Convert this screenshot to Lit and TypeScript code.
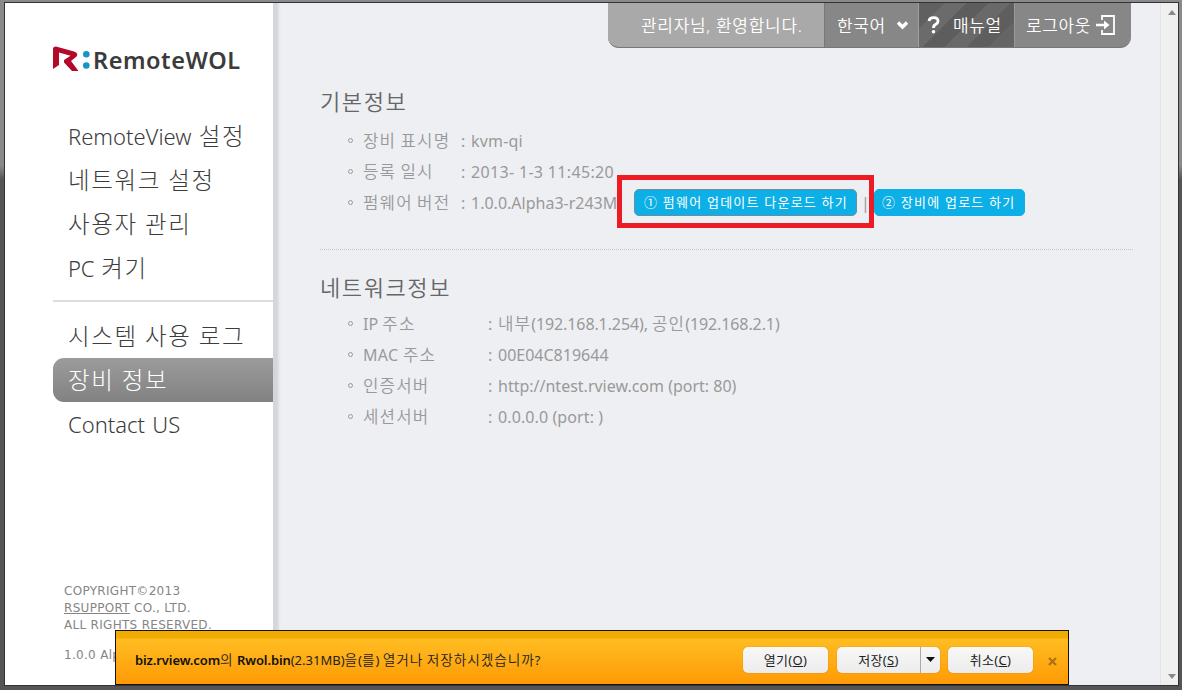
import { LitElement, html, css, nothing } from "lit";
import { customElement } from "lit/decorators.js";
import { styleMap } from "lit/directives/style-map.js";

interface Entry { label: string; ls?: number; active?: boolean; }
interface Row { label: string; value: string; ls?: number; vs?: number; }

const MENU_MAIN: Entry[] = [
  { label: "RemoteView 설정" },
  { label: "네트워크 설정" },
  { label: "사용자 관리" },
  { label: "PC 켜기", ls: -0.2 },
];
const MENU_SUB: Entry[] = [
  { label: "시스템 사용 로그" },
  { label: "장비 정보", active: true },
  { label: "Contact US" },
];
const BASIC: Row[] = [
  { label: "장비 표시명", value: "kvm-qi", vs: 0.2 },
  { label: "등록 일시", value: "2013- 1-3 11:45:20", vs: 0.33 },
  { label: "펌웨어 버전", value: "1.0.0.Alpha3-r243M" },
];
const NETWORK: Row[] = [
  { label: "IP 주소", value: "내부(192.168.1.254), 공인(192.168.2.1)", vs: -0.1 },
  { label: "MAC 주소", value: "00E04C819644", ls: 0.3 },
  { label: "인증서버", value: "http://ntest.rview.com (port: 80)" },
  { label: "세션서버", value: "0.0.0.0 (port: )", vs: 0.1 },
];

const spacing = (v?: number) => styleMap({ letterSpacing: `${v ?? 0}px` });

/** Wraps each Hangul run so that it can be set wider than the Latin text round it. */
const mixed = (text: string) =>
  text.split(/([가-힣]+)/).map((part) => (/[가-힣]/.test(part) ? html`<span class="ko">${part}</span>` : part));

@customElement("app-root")
export class AppRoot extends LitElement {
  static styles = css`
    :host { display: block; width: 1182px; height: 690px; font-family: "Noto Sans", "Noto Sans CJK KR", sans-serif; }
    * { box-sizing: border-box; }
    .ko { font-size: 1.05em; letter-spacing: 0.07em; font-weight: 350; font-family: "Noto Sans CJK KR", sans-serif; line-height: 1; }
    .frame { position: relative; height: 690px; padding: 2px 3px 4px 4px; overflow: hidden;
      background: linear-gradient(#8a8a8a, #8a8a8a 24%, #555 26%, #555); }
    .window { height: 684px; display: flex; border: 1px solid #333; background: #eeeff3; }
    .side { width: 268px; background: #fff; display: flex; flex-direction: column; flex: none; }
    .logo { display: block; margin: 42px 0 0 47px; }
    .menu { display: flex; flex-direction: column; margin-left: 48px; }
    .menu.main { margin-top: 37px; height: 188px; border-bottom: 2px solid #ddd; }
    .menu.sub { margin-top: 12px; }
    .item { height: 44px; line-height: 44px; padding-left: 15px; font-size: 22px; font-weight: 350; word-spacing: 1.5px; color: #3c3c3c; white-space: nowrap; }
    .item .ko { font-weight: 300; font-size: 23.5px; }
    .item.active { color: #fff; background: linear-gradient(#9b9b9b, #828282); border-radius: 11px 0 0 11px; }
    .copy { margin: 137px 0 0 59px; font: 12px/17px "DejaVu Sans", sans-serif; letter-spacing: 0.3px; color: #858585; white-space: nowrap; }
    .copy div { height: 17px; }
    .copy .ver { margin-top: 13px; }
    .shade { width: 8px; flex: none; background: linear-gradient(90deg, #d6d6da 0 4px, #e6e7eb 6px, #eeeff3); }
    .main-area { flex: 1; display: flex; flex-direction: column; padding-left: 39px; min-width: 0; }
    .top { display: flex; width: 523px; height: 45px; margin-left: 288px; border-radius: 0 0 11px 11px; overflow: hidden;
      background: #878787; color: #fff; font-size: 17px; font-weight: 350; letter-spacing: 0.6px; line-height: 43px; border-bottom: 1px solid #777; white-space: nowrap; }
    .top > div { display: flex; align-items: center; }
    .welcome { width: 217px; padding-left: 33px; background: #a9a9a9; border-right: 1px solid #777; letter-spacing: 0.7px; }
    .lang { width: 94px; padding-left: 12px; gap: 10px; border-right: 1px solid #a0a0a0; }
    .manual { width: 96px; padding-left: 8px; gap: 13px; background: linear-gradient(135deg, #606060 0 18%, #6b6b6b 18% 34%, #5d5d5d 34% 50%, #696969 50% 66%, #5e5e5e 66% 82%, #656565 82%); border-right: 1px solid #999; }
    .logout { flex: 1; padding-left: 11px; gap: 5px; }
    h2 { margin: 0; font-size: 21px; font-weight: 300; line-height: 30px; height: 30px; color: #666; white-space: nowrap; }
    .h-basic { margin-top: 39px; }
    .rows { display: flex; flex-direction: column; padding: 8px 0 0 29px; }
    .rows.network { padding-top: 5px; }
    .row { display: flex; align-items: center; height: 31px; line-height: 24px; font-size: 16px; color: #999; white-space: nowrap; }
    .dot { width: 5px; height: 5px; border: 1px solid #999; border-radius: 50%; margin-right: 10px; flex: none; }
    .rows .dot { margin-left: -1px; }
    .label { width: 98px; flex: none; }
    .colon { width: 10px; flex: none; }
    .network .label { width: 125px; }
    .value { width: 150px; flex: none; }
    .network .value { width: auto; }
    .btn { height: 27px; line-height: 25px; border-radius: 5px; background: #0cafe6; color: #fff; font-size: 13px; letter-spacing: 1.22px; padding-left: 9px; border: 1px solid #0cafe6; }
    .b1 { width: 223px; margin-left: 13px; border-color: #6a8ea0; }
    .b2 { width: 151px; padding-left: 7px; }
    .sep { width: 17px; padding-left: 4px; }
    .line { width: 813px; margin-top: 31px; border-top: 1px dotted #c4c4c8; }
    .h-net { margin-top: 23px; }
    .scroll { width: 18px; flex: none; background: #f0f0f0; border-left: 1px solid #e4e4e6; display: flex; flex-direction: column; justify-content: space-between; align-items: center; padding: 7px 0 6px 4px; }
    .mark { position: absolute; left: 617px; top: 175px; width: 257px; height: 53px; border: 5px solid #ed1c24; }
    .bar { position: absolute; left: 115px; top: 630px; width: 954px; height: 55px; border: 1px solid #1a1010; display: flex; align-items: center; padding: 5px 0 0 19px;
      background: linear-gradient(#f0ac00 0 7px, #ffbd22 8px, #ff9a05); font-size: 13px; color: #222; white-space: nowrap; }
    .msg { width: 608px; flex: none; }
    .msg b { font-weight: 600; color: #111; letter-spacing: -0.1px; }
    .pill { height: 26px; line-height: 26px; border-radius: 5px; background: linear-gradient(#f8f8f8, #ececec); text-align: center; letter-spacing: 0.3px; box-shadow: 0 0 1px #a66a00; }
    .open { width: 85px; margin-right: 9px; }
    .save { width: 103px; margin-right: 8px; display: flex; }
    .save span { width: 84px; border-right: 1px solid #aaa; }
    .save svg { margin: 10px 0 0 5px; }
    .close { margin: 3px 0 0 6px; }
  `;

  private item(e: Entry) {
    return html`<div class="item ${e.active ? "active" : ""}"><span style=${spacing(e.ls)}>${mixed(e.label)}</span></div>`;
  }

  private row(r: Row, extra: unknown = nothing) {
    return html`<div class="row"><i class="dot"></i><div class="label"><span style=${spacing(r.ls)}>${mixed(r.label)}</span></div><div class="colon">:</div><div class="value"><span style=${spacing(r.vs)}>${mixed(r.value)}</span></div>${extra}</div>`;
  }

  render() {
    const buttons = html`<div class="btn b1"><span>① 펌웨어 업데이트 다운로드 하기</span></div><div class="sep">|</div><div class="btn b2"><span>② 장비에 업로드 하기</span></div>`;
    return html`<div class="frame">
      <div class="window">
        <div class="side">
          <svg class="logo" width="192" height="32" viewBox="0 0 192 32">
            <path d="M1 4 Q1 1.500 4 1.500 L22 6.500 Q27 8.500 24.500 11.500 L19 16 L26.500 26 H20 L12 17.500 V15 L18.500 10.800 L7 7.500 V20 L1 24Z" fill="#b3092b"/>
            <circle cx="34.300" cy="9.300" r="3.300" fill="#1795c4"/><circle cx="34.300" cy="20.500" r="3.300" fill="#1795c4"/>
            <text x="41" y="23.500" font-family="Noto Sans" font-weight="600" font-size="23.500" fill="#3b3b3b" textLength="147">RemoteWOL</text>
          </svg>
          <div class="menu main">${MENU_MAIN.map((e) => this.item(e))}</div>
          <div class="menu sub">${MENU_SUB.map((e) => this.item(e))}</div>
          <div class="copy"><div>COPYRIGHT©2013</div><div><u>RSUPPORT</u> CO., LTD.</div><div>ALL RIGHTS RESERVED.</div><div class="ver">1.0.0 Alpha3</div></div>
        </div>
        <div class="shade"></div>
        <div class="main-area">
          <div class="top">
            <div class="welcome"><span>관리자님, 환영합니다.</span></div>
            <div class="lang"><span>한국어</span><svg width="13" height="10" viewBox="0 0 13 10"><path d="M2 2.500 L6.500 7 L11 2.500" fill="none" stroke="#fff" stroke-width="3.400"/></svg></div>
            <div class="manual"><svg width="13" height="18" viewBox="0 0 13 18"><path d="M2 5 Q2.500 1.700 6.500 1.700 Q11 1.700 11 5 Q11 7.200 8.500 8.500 Q6.500 9.500 6.500 12" fill="none" stroke="#fff" stroke-width="2.800"/><circle cx="6.500" cy="15.700" r="1.800" fill="#fff"/></svg><span>매뉴얼</span></div>
            <div class="logout"><span>로그아웃</span><svg width="20" height="22" viewBox="0 0 20 22"><path d="M6 6 V2 H18 V20 H6 V16" fill="none" stroke="#fff" stroke-width="1.800"/><path d="M0 9.800 H8 V6.500 L13.500 11 L8 15.500 V12.200 H0Z" fill="#fff"/></svg></div>
          </div>
          <h2 class="h-basic">${mixed("기본정보")}</h2>
          <div class="rows">${BASIC.map((r, i) => this.row(r, i === 2 ? buttons : nothing))}</div>
          <div class="line"></div>
          <h2 class="h-net">${mixed("네트워크정보")}</h2>
          <div class="rows network">${NETWORK.map((r) => this.row(r))}</div>
        </div>
        <div class="scroll"><svg width="8" height="5"><path d="M0 5 L4 0 L8 5Z" fill="#888"/></svg><svg width="8" height="5"><path d="M0 0 L4 5 L8 0Z" fill="#888"/></svg></div>
      </div>
      <div class="mark"></div>
      <div class="bar">
        <div class="msg"><b>biz.rview.com</b>${mixed("의")} <b>Rwol.bin</b>${mixed("(2.31MB)을(를) 열거나 저장하시겠습니까?")}</div>
        <div class="pill open">열기(<u>O</u>)</div>
        <div class="pill save"><span>저장(<u>S</u>)</span><svg width="9" height="5"><path d="M0 0 H9 L4.500 5Z" fill="#111"/></svg></div>
        <div class="pill open">취소(<u>C</u>)</div>
        <svg class="close" width="9" height="9" viewBox="0 0 9 9"><path d="M1 1 L8 8 M8 1 L1 8" stroke="#b06f10" stroke-width="2.200"/></svg>
      </div>
    </div>`;
  }
}
